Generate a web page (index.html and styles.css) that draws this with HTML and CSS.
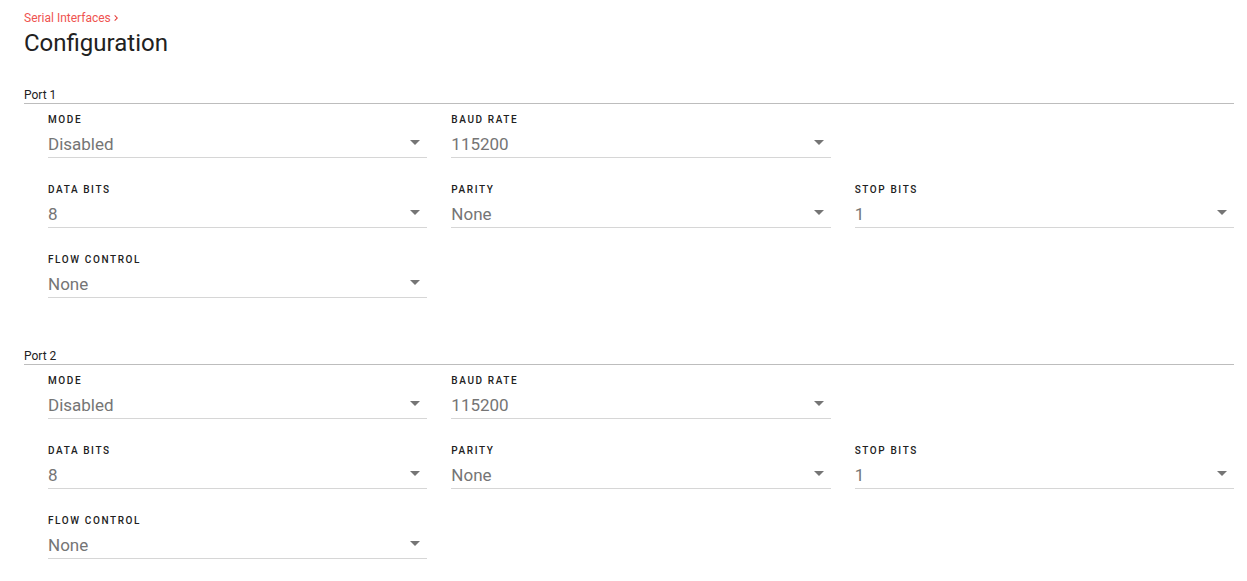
FILE: index.html
```html
<!DOCTYPE html>
<html>
<head>
<meta charset="utf-8">
<link rel="stylesheet" href="styles.css">
</head>
<body>
<div class="page">
  <div class="breadcrumb">
    <span class="crumb">Serial Interfaces</span>
    <svg class="chev" width="12" height="12" viewBox="0 0 24 24"><path d="M10 6L8.59 7.41 13.17 12l-4.58 4.59L10 18l6-6z" fill="#e53935"/></svg>
  </div>
  <h1 class="title">Configuration</h1>

  <section class="port">
    <div class="port-head">Port 1</div>
    <div class="grid">
      <div class="field"><div class="label">Mode</div><div class="select"><span class="value">Disabled</span><span class="arrow"></span></div></div>
      <div class="field"><div class="label">Baud Rate</div><div class="select"><span class="value">115200</span><span class="arrow"></span></div></div>
      <div class="field empty"></div>
      <div class="field"><div class="label">Data Bits</div><div class="select"><span class="value">8</span><span class="arrow"></span></div></div>
      <div class="field"><div class="label">Parity</div><div class="select"><span class="value">None</span><span class="arrow"></span></div></div>
      <div class="field"><div class="label">Stop Bits</div><div class="select"><span class="value">1</span><span class="arrow"></span></div></div>
      <div class="field"><div class="label">Flow Control</div><div class="select"><span class="value">None</span><span class="arrow"></span></div></div>
    </div>
  </section>

  <section class="port">
    <div class="port-head">Port 2</div>
    <div class="grid">
      <div class="field"><div class="label">Mode</div><div class="select"><span class="value">Disabled</span><span class="arrow"></span></div></div>
      <div class="field"><div class="label">Baud Rate</div><div class="select"><span class="value">115200</span><span class="arrow"></span></div></div>
      <div class="field empty"></div>
      <div class="field"><div class="label">Data Bits</div><div class="select"><span class="value">8</span><span class="arrow"></span></div></div>
      <div class="field"><div class="label">Parity</div><div class="select"><span class="value">None</span><span class="arrow"></span></div></div>
      <div class="field"><div class="label">Stop Bits</div><div class="select"><span class="value">1</span><span class="arrow"></span></div></div>
      <div class="field"><div class="label">Flow Control</div><div class="select"><span class="value">None</span><span class="arrow"></span></div></div>
    </div>
  </section>
</div>
</body>
</html>
```

FILE: styles.css
```css
html, body {
  margin: 0;
  padding: 0;
  background: #ffffff;
}
body {
  font-family: Roboto, "Liberation Sans", Arial, sans-serif;
  color: #212121;
}
.page {
  padding: 10px 13px 0 24px;
}
.breadcrumb {
  display: flex;
  align-items: center;
  height: 16px;
  font-size: 12px;
  line-height: 16px;
}
.crumb {
  color: #ef5350;
}
.chev {
  margin-left: -1px;
}
.title {
  margin: 1px 0 28px 0;
  font-size: 24px;
  line-height: 32px;
  font-weight: 400;
  color: #212121;
}
.port {
  margin-bottom: 50px;
}
.port-head {
  font-size: 12px;
  line-height: 16px;
  border-bottom: 1px solid #bdbdbd;
  color: #212121;
}
.grid {
  display: grid;
  grid-template-columns: repeat(3, 1fr);
  column-gap: 24px;
  row-gap: 24px;
  margin-top: 8px;
  padding-left: 24px;
}
.label {
  font-size: 10px;
  line-height: 16px;
  font-weight: 500;
  letter-spacing: 1.6px;
  text-transform: uppercase;
  color: #212121;
}
.select {
  margin-top: 4px;
  display: flex;
  align-items: center;
  justify-content: space-between;
  height: 24px;
  padding-bottom: 1px;
  border-bottom: 1px solid #d6d6d6;
}
.value {
  font-size: 17px;
  line-height: 24px;
  color: #757575;
}
.arrow {
  width: 0;
  height: 0;
  border-left: 5px solid transparent;
  border-right: 5px solid transparent;
  border-top: 5px solid #757575;
  margin-right: 7px;
  margin-bottom: 3px;
}
```
